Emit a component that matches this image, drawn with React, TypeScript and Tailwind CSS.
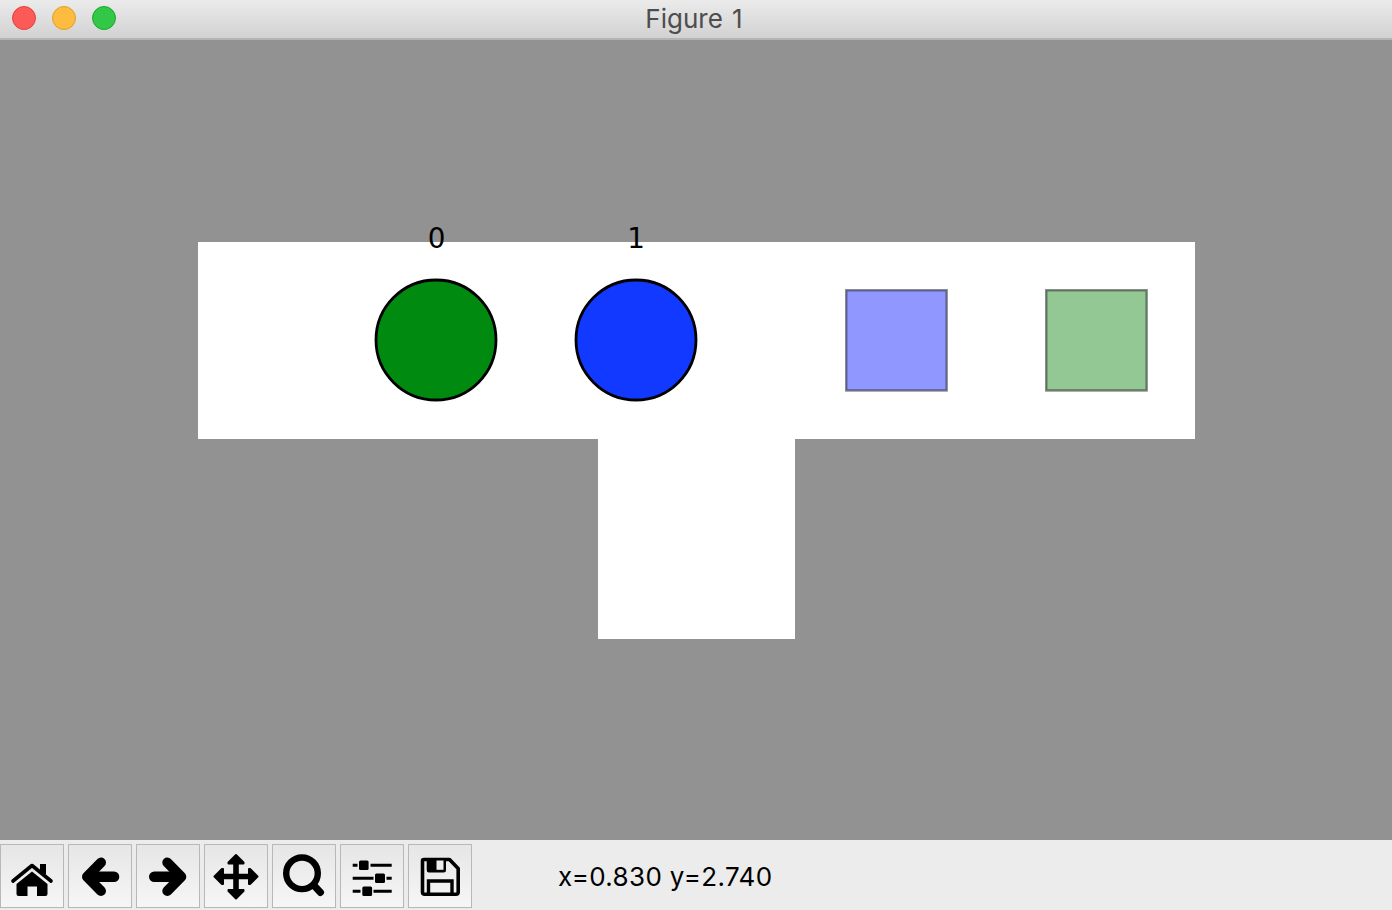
import type { ReactNode } from 'react'

function HomeIcon() {
  return (
    <>
      <path d="M13 37 L32 21.5 L51 37" fill="none" stroke="#000" strokeWidth="3.6" strokeLinecap="round" strokeLinejoin="round" />
      <rect x="40" y="20" width="6" height="10" />
      <path d="M32 27.5 L47.5 40 V50 Q47.5 52 45.5 52 H37 V42.5 H27.5 V52 H18.5 Q16.5 52 16.5 50 V40 Z" />
    </>
  )
}

function LeftIcon() {
  return (
    <>
      <path d="M33 18.5 L19 32.7 L33 47" fill="none" stroke="#000" strokeWidth="10" strokeLinecap="round" strokeLinejoin="round" />
      <path d="M21 32.7 H46" fill="none" stroke="#000" strokeWidth="10.6" strokeLinecap="round" />
    </>
  )
}

function RightIcon() {
  return (
    <g transform="translate(64.3 0) scale(-1 1)">
      <LeftIcon />
    </g>
  )
}

function MoveIcon() {
  return (
    <path
      d="M32 11 L39.5 18.5 V19.5 H33.8 V30.7 H45 V25 H46 L53.5 32.5 L46 40 H45 V34.3 H33.8 V46 H39.5 V47 L32 54.5 L24.5 47 V46 H30.2 V34.3 H19 V40 H18 L10.5 32.5 L18 25 H19 V30.7 H30.2 V19.5 H24.5 V18.5 Z"
      stroke="#000"
      strokeWidth="2"
      strokeLinejoin="round"
    />
  )
}

function SearchIcon() {
  return (
    <>
      <circle cx="30" cy="29.3" r="15.8" fill="none" stroke="#000" strokeWidth="6.4" />
      <path d="M42 41.5 L48.5 48.5" fill="none" stroke="#000" strokeWidth="7" strokeLinecap="round" />
    </>
  )
}

function SlidersIcon() {
  return (
    <g fill="none" stroke="#000" strokeWidth="3">
      <path d="M12.7 21.3 H17.5 M30.5 21.3 H51.7" />
      <path d="M12.7 34.3 H33.5 M46.5 34.3 H51.7" />
      <path d="M12.7 47.3 H20.5 M33.5 47.3 H51.7" />
      <rect x="19" y="16.5" width="9.6" height="9.6" rx="1.5" fill="#000" stroke="none" />
      <rect x="35" y="29.5" width="10" height="9.6" rx="1.5" fill="#000" stroke="none" />
      <rect x="22.3" y="42.5" width="9.8" height="9.6" rx="1.5" fill="#000" stroke="none" />
    </g>
  )
}

function SaveIcon() {
  return (
    <>
      <path d="M16 15.5 H41.5 L50.2 24.5 V48 Q50.2 50.3 48 50.3 H16.7 Q14.5 50.3 14.5 48 V17 Q14.5 15.5 16 15.5 Z" fill="none" stroke="#000" strokeWidth="3.6" strokeLinejoin="round" />
      <path d="M18.7 15 H38 V26 Q38 28.5 35.5 28.5 H21 Q18.7 28.5 18.7 26 Z" />
      <rect x="28.5" y="16.5" width="7" height="9.3" fill="#ededed" />
      <path d="M20.5 50 V37 H44 V50" fill="none" stroke="#000" strokeWidth="3.4" />
    </>
  )
}

function ToolButton({ children }: { children: ReactNode }) {
  return (
    <div className="h-[64px] w-[64px] border border-[#b8b8b8] bg-gradient-to-b from-[#e6e6e6] to-[#f6f6f6]">
      <svg viewBox="0 0 64 64" className="-m-px block h-[64px] w-[64px]">
        {children}
      </svg>
    </div>
  )
}

function TrafficLight({ className }: { className: string }) {
  return <div className={`h-[24px] w-[24px] rounded-full border ${className}`} />
}

export default function App() {
  return (
    <div className="flex h-[910px] w-[1392px] flex-col overflow-hidden bg-[#929292]">
      <header className="relative flex h-[40px] shrink-0 items-center justify-center border-b-2 border-[#b4b4b4] bg-gradient-to-b from-[#ebebeb] to-[#d2d2d2] pr-[4px]">
        <div className="absolute left-[12px] top-[6px] flex gap-[16px]">
          <TrafficLight className="border-[#e0443e] bg-[#fc5a56]" />
          <TrafficLight className="border-[#dea123] bg-[#fdbc40]" />
          <TrafficLight className="border-[#1aab29] bg-[#33c748]" />
        </div>
        <span className="font-['Inter',sans-serif] text-[26px] leading-none text-[#4d4d4d] [word-spacing:2px]">Figure 1</span>
      </header>

      <main className="h-[800px] shrink-0">
        <svg viewBox="0 0 1392 800" className="block h-[800px] w-[1392px]">
          <path d="M198 202 H1195 V399 H795 V599 H598 V399 H198 Z" fill="#fff" />
          <circle cx="436" cy="300" r="60" fill="#008b10" stroke="#000" strokeWidth="2.8" />
          <circle cx="636" cy="300" r="60" fill="#1239ff" stroke="#000" strokeWidth="2.8" />
          <rect x="846.2" y="250.2" width="100.5" height="100.3" fill="#9098ff" stroke="#000" strokeOpacity="0.45" strokeWidth="2.4" />
          <rect x="1046.2" y="250.2" width="100.5" height="100.3" fill="#93c793" stroke="#000" strokeOpacity="0.45" strokeWidth="2.4" />
          <text x="436.5" y="207.5" textAnchor="middle" fontSize="27.8" fontFamily="'DejaVu Sans', sans-serif">0</text>
          <text x="636" y="207.5" textAnchor="middle" fontSize="27.8" fontFamily="'DejaVu Sans', sans-serif">1</text>
        </svg>
      </main>

      <footer className="flex h-[70px] shrink-0 items-start gap-[4px] bg-[#ececec] pt-[4px]">
        <ToolButton><HomeIcon /></ToolButton>
        <ToolButton><LeftIcon /></ToolButton>
        <ToolButton><RightIcon /></ToolButton>
        <ToolButton><MoveIcon /></ToolButton>
        <ToolButton><SearchIcon /></ToolButton>
        <ToolButton><SlidersIcon /></ToolButton>
        <ToolButton><SaveIcon /></ToolButton>
        <span className="ml-[82px] mt-[18px] font-['Inter',sans-serif] text-[26px] leading-[30px] tracking-[0.35px] text-black">x=0.830 y=2.740</span>
      </footer>
    </div>
  )
}
